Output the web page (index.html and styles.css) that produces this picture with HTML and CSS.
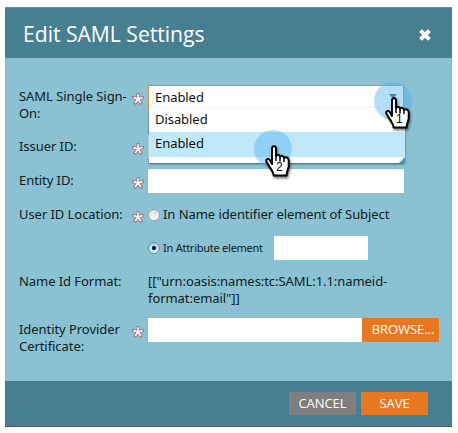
FILE: index.html
```html
<!DOCTYPE html>
<html lang="en">
<head>
<meta charset="utf-8">
<title>Edit SAML Settings</title>
<link rel="stylesheet" href="styles.css">
</head>
<body>
<svg class="defs" width="0" height="0">
  <symbol id="star" viewBox="0 0 12 12">
    <path class="star-halo" d="M6 1.2V6M1.4 4.5 6 6M10.6 4.5 6 6M3.2 10 6 6M8.8 10 6 6"/>
    <path class="star-core" d="M6 1.2V6M1.4 4.5 6 6M10.6 4.5 6 6M3.2 10 6 6M8.8 10 6 6"/>
  </symbol>
  <symbol id="hand" viewBox="0 0 26 33">
    <path d="M7 19V3.6C7 .3 11 .3 11 3.6V11C12.2 9.1 14.8 9.6 15 11.7 16.4 10.1 18.8 10.9 19 13 20.8 11.5 23.7 12.5 23.7 15.2V21C23.7 24.3 21.6 25.7 21.6 30.5H8.7C8.5 26.7 6 24.4 4.2 21.2L1.7 17C.2 14.1 3.2 12.8 4.7 15Z" fill="#fff" stroke="#000" stroke-width="2" stroke-linejoin="round"/>
    <path d="M11 10V15.5M15 11.5V16M19 13V16.5" fill="none" stroke="#000" stroke-width="1.5" stroke-linecap="round"/>
  </symbol>
</svg>
<div class="dialog">
  <header class="header">
    <h1 class="title">Edit SAML Settings</h1>
    <svg class="close" viewBox="0 0 14 14"><path d="M2.6 2.6 11.4 11.4M11.4 2.6 2.6 11.4"/></svg>
  </header>
  <main class="form">
    <div class="row row-sso">
      <div class="label">SAML Single Sign-<br>On:</div>
      <svg class="star"><use href="#star"/></svg>
      <div class="field select">
        <span>Enabled</span>
        <i class="arrow"></i>
        <div class="menu">
          <div class="option">Disabled</div>
          <div class="option active">Enabled</div>
          <i class="corner"></i>
        </div>
        <div class="pointer pointer-one"><svg><use href="#hand"/></svg><b>1</b></div>
        <div class="pointer pointer-two"><svg><use href="#hand"/></svg><b>2</b></div>
      </div>
    </div>
    <div class="row row-issuer">
      <div class="label">Issuer ID:</div>
      <svg class="star"><use href="#star"/></svg>
      <div class="field"></div>
    </div>
    <div class="row row-entity">
      <div class="label">Entity ID:</div>
      <svg class="star"><use href="#star"/></svg>
      <div class="field"></div>
    </div>
    <div class="row row-name">
      <div class="label">User ID Location:</div>
      <svg class="star"><use href="#star"/></svg>
      <div class="choice"><i class="radio"></i><span>In Name identifier element of Subject</span></div>
    </div>
    <div class="row row-attr">
      <div class="choice small"><i class="radio checked"></i><span>In Attribute element</span><div class="field attr"></div></div>
    </div>
    <div class="row row-format">
      <div class="label">Name Id Format:</div>
      <div class="value">[["urn:oasis:names:tc:SAML:1.1:nameid-<br>format:email"]]</div>
    </div>
    <div class="row row-cert">
      <div class="label">Identity Provider<br>Certificate:</div>
      <svg class="star"><use href="#star"/></svg>
      <div class="upload"><div class="field"></div><div class="btn browse">BROWSE...</div></div>
    </div>
  </main>
  <footer class="footer">
    <div class="btn cancel">CANCEL</div>
    <div class="btn save">SAVE</div>
  </footer>
</div>
</body>
</html>
```
FILE: styles.css
```css
* { box-sizing: border-box; }
body { margin: 0; background: #fff; font: 13px/17px "Noto Sans", sans-serif; letter-spacing: -.06px; color: #0e1c20; }
.defs { position: absolute; }
.dialog { width: 447px; height: 420px; margin: 7px 0 0 5px; display: flex; flex-direction: column; background: #8ac2d3; }
.header { height: 51px; flex: none; padding: 2px 20px 0 18px; display: flex; align-items: center; justify-content: space-between; background: #467f91; border-top: 1px solid #5b90a0; }
.title { margin: 0; font: 400 21.1px/28px "Open Sans", sans-serif; letter-spacing: normal; color: #fff; }
.close { width: 14px; height: 14px; margin-top: 2px; fill: none; stroke: #fff; stroke-width: 4; }

.form { flex: 1; padding: 27px 0 0 14px; }
.row { display: grid; grid-template-columns: 113px 16px 291px; align-items: start; }
.row-sso { height: 50px; }
.row-issuer, .row-entity, .row-attr { height: 34px; }
.row-name { height: 33px; }
.row-format { height: 48px; }
.label { padding-top: 3px; white-space: nowrap; }
.value { grid-column: 3; padding-top: 3px; white-space: nowrap; }
.star { width: 12px; height: 12px; margin-top: 8px; overflow: visible; }
.star-halo { fill: none; stroke: #b04c58; stroke-width: 3.2; stroke-linecap: round; opacity: .65; }
.star-core { fill: none; stroke: #fff; stroke-width: 1.5; }
.field { width: 256px; height: 24px; background: #fff; }

.select { position: relative; border: 1px solid #e08b42; padding: 3px 0 0 6px; color: #111; }
.arrow { position: absolute; right: 6px; top: 8px; border: 4px solid transparent; border-top: 5px solid #43687a; }
.menu { position: absolute; z-index: 1; left: 0; top: 22px; width: 256px; height: 55px; background: #fff; box-shadow: 0 1px 2px #35606f; }
.option { height: 24px; padding: 3px 0 0 6px; line-height: 17px; }
.option.active { height: 25px; padding-top: 3px; background: #c1e8f9; }
.corner { position: absolute; right: 0; bottom: 0; border: 3px solid; border-color: transparent #469cc1 #469cc1 transparent; }
.pointer { position: absolute; z-index: 2; width: 38px; height: 38px; border-radius: 50%; background: rgba(77, 175, 238, .42); }
.pointer-one { left: 225px; top: -4px; }
.pointer-two { left: 105px; top: 44px; }
.pointer svg { position: absolute; left: 11px; top: 15px; width: 26px; height: 33px; filter: drop-shadow(1px 2px 1px rgba(0, 0, 0, .5)); }
.pointer b { position: absolute; left: 22px; top: 30px; font: 400 12px/14px "Liberation Sans", sans-serif; color: #000; }

.choice { grid-column: 3; height: 23px; display: flex; align-items: center; white-space: nowrap; }
.radio { width: 12px; height: 12px; margin-right: 3px; flex: none; border: 1px solid #9aa9ae; border-radius: 50%; background: linear-gradient(#dcdcdc, #fff); }
.radio.checked { border-color: #628eb3; background: radial-gradient(circle, #0a1f3d 0 1.8px, transparent 2.3px), linear-gradient(#a9cdf0, #dff7ff); }
.small { font-size: 11px; letter-spacing: -.25px; }
.attr { width: 94px; margin-left: 11px; }
.upload { display: flex; }
.upload .field { width: 214px; }

.btn { height: 23px; font: 13px/22px "Open Sans", sans-serif; letter-spacing: -.05px; color: #fff; text-align: center; white-space: nowrap; }
.browse { width: 77px; height: 24px; padding-left: 5px; background: #e87722; }
.footer { height: 46px; flex: none; display: flex; justify-content: flex-end; gap: 5px; padding: 11px 24px 0 0; background: #467f91; border-bottom: 1px solid #4c595d; }
.cancel { width: 67px; background: #7f7f7f; }
.save { width: 67px; background: #e87722; }
```
